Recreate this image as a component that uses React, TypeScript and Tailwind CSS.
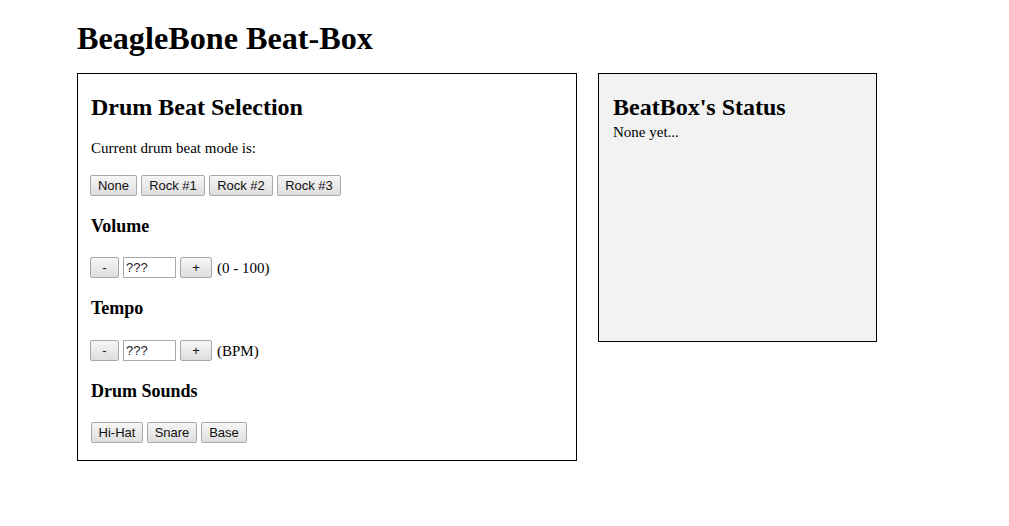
import React from "react";

const serif = { fontFamily: '"Liberation Serif", "Times New Roman", serif' };

function Btn({ children, w }: { children: React.ReactNode; w: string }) {
  return (
    <button
      className={`${w} h-[21px] rounded-[2px] border border-[#a7a7a7] bg-gradient-to-b from-[#f6f6f6] to-[#dedede] text-[13px] leading-[19px] text-[#111] text-center`}
      style={{ fontFamily: '"Liberation Sans", Arial, sans-serif' }}
    >
      {children}
    </button>
  );
}

function Input() {
  return (
    <div
      className="w-[53px] h-[21px] border border-[#a9a9a9] bg-white text-[13px] leading-[19px] pl-[2px] text-[#222]"
      style={{ fontFamily: '"Liberation Sans", Arial, sans-serif' }}
    >
      ???
    </div>
  );
}

export default function App() {
  return (
    <div className="w-[1009px] h-[526px] bg-white text-black pl-[77px] pt-[20px]" style={serif}>
      <h1 className="text-[32.2px] leading-[37px] font-bold">BeagleBone Beat-Box</h1>
      <div className="flex items-start gap-[21px] mt-[16px]">
        <div className="w-[500px] h-[388px] border border-black pl-[13px] pt-[19px]">
          <h2 className="text-[24px] leading-[28px] font-bold">Drum Beat Selection</h2>
          <p className="text-[15px] leading-[18px] mt-[18px]">Current drum beat mode is:</p>
          <div className="flex gap-[4px] mt-[18px] -ml-[1px]">
            <Btn w="w-[47px]">None</Btn>
            <Btn w="w-[64px]">Rock #1</Btn>
            <Btn w="w-[64px]">Rock #2</Btn>
            <Btn w="w-[64px]">Rock #3</Btn>
          </div>
          <h3 className="text-[18px] leading-[21px] font-bold mt-[20px]">Volume</h3>
          <div className="flex items-center gap-[4px] mt-[20px] -ml-[1px]">
            <Btn w="w-[29px]">-</Btn>
            <Input />
            <Btn w="w-[32px]">+</Btn>
            <span className="text-[15px] leading-[18px] ml-[1px]">(0 - 100)</span>
          </div>
          <h3 className="text-[18px] leading-[21px] font-bold mt-[20px]">Tempo</h3>
          <div className="flex items-center gap-[4px] mt-[21px] -ml-[1px]">
            <Btn w="w-[29px]">-</Btn>
            <Input />
            <Btn w="w-[32px]">+</Btn>
            <span className="text-[15px] leading-[18px] ml-[1px]">(BPM)</span>
          </div>
          <h3 className="text-[18px] leading-[21px] font-bold mt-[20px]">Drum Sounds</h3>
          <div className="flex gap-[4px] mt-[20px]">
            <Btn w="w-[52px]">Hi-Hat</Btn>
            <Btn w="w-[50px]">Snare</Btn>
            <Btn w="w-[46px]">Base</Btn>
          </div>
        </div>
        <div className="w-[279px] h-[269px] border border-black bg-[#f2f2f2] pl-[14px] pt-[19px]">
          <h2 className="text-[24px] leading-[28px] font-bold">BeatBox's Status</h2>
          <p className="text-[15px] leading-[18px] mt-[2px]">None yet...</p>
        </div>
      </div>
    </div>
  );
}
